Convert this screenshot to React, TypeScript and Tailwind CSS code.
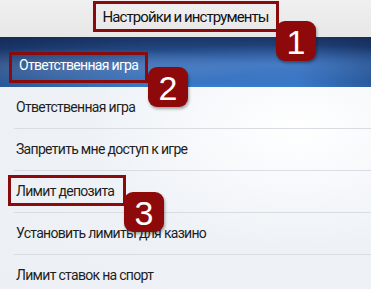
import React from "react";

const ROWS = [
  "Ответственная игра",
  "Запретить мне доступ к игре",
  "Лимит депозита",
  "Установить лимиты для казино",
  "Лимит ставок на спорт",
];

const font = { fontFamily: "Roboto, 'Liberation Sans', sans-serif" };

function Badge({ n, className }: { n: number; className: string }) {
  return (
    <div
      className={`absolute flex h-[40px] w-[40px] items-center justify-center rounded-[9px] bg-[#8e0a0a] pt-[1px] text-[34px] leading-none text-white shadow-[1px_2px_3px_rgba(0,0,0,0.35)] ${className}`}
      style={{ fontFamily: "'Liberation Sans', sans-serif" }}
    >
      {n}
    </div>
  );
}

export default function App() {
  return (
    <div
      className="relative h-[289px] w-[371px] overflow-hidden bg-[#f1f3f6] text-[14px] text-[#1e1e1e]"
      style={font}
    >
      <header className="flex h-[37px] items-center justify-center bg-gradient-to-b from-[#f0f0f0] to-[#e7e7e7] pb-[3px] text-[15px] tracking-[-0.9px] text-[#111]">
        Настройки и инструменты
      </header>

      <div className="relative flex h-[50px] items-end overflow-hidden bg-gradient-to-b from-[#1a3464] via-[#2a5ba3] to-[#3a7ccd] pb-[11px] pl-[19px] tracking-[-0.7px] text-white">
        <div className="absolute inset-0 bg-[radial-gradient(ellipse_at_20%_60%,rgba(255,255,255,0.18)_0%,rgba(255,255,255,0)_45%),radial-gradient(ellipse_at_75%_55%,rgba(120,180,255,0.35)_0%,rgba(120,180,255,0)_50%),linear-gradient(to_right,rgba(10,25,60,0.35),rgba(10,25,60,0)_40%,rgba(10,25,60,0)_80%,rgba(10,25,60,0.3))]" />
        <span className="relative">Ответственная игра</span>
      </div>

      <ul className="bg-[radial-gradient(ellipse_at_80%_20%,#ffffff_0%,#eef2f7_50%,#eceff3_100%)]">
        {ROWS.map((label) => (
          <li key={label} className="ml-[14px] flex h-[42px] items-center border-b border-[#d9dde2] pl-[2px] tracking-[-0.7px]">
            {label}
          </li>
        ))}
      </ul>

      {/* annotations */}
      <div className="absolute left-[93px] top-[1px] h-[31px] w-[186px] border-[3px] border-[#8a0b0b]" />
      <div className="absolute left-[9px] top-[52px] h-[31px] w-[139px] border-[3px] border-[#8a0b0b]" />
      <div className="absolute left-[8px] top-[175px] h-[31px] w-[118px] border-[3px] border-[#8a0b0b]" />
      <Badge n={1} className="left-[276px] top-[21px]" />
      <Badge n={2} className="left-[148px] top-[67px]" />
      <Badge n={3} className="left-[124px] top-[192px]" />
    </div>
  );
}
